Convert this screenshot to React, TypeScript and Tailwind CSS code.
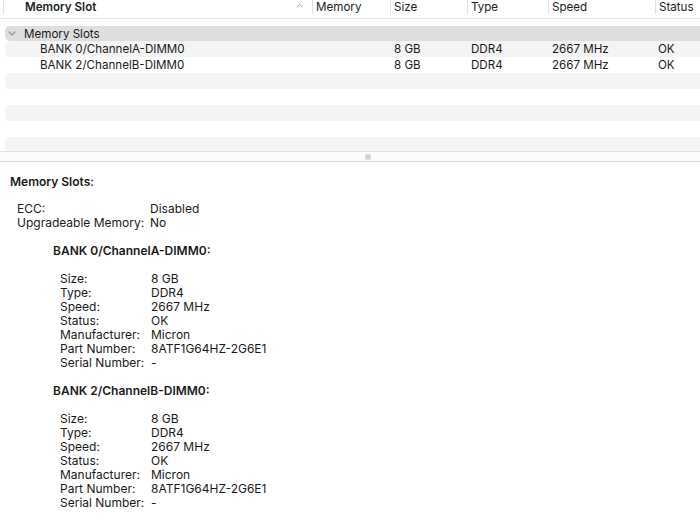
const cols = "grid grid-cols-[307px_78px_77px_81px_107px_1fr]";

type Slot = { name: string; size: string; type: string; speed: string; status: string };

const slots: Slot[] = [
  { name: "BANK 0/ChannelA-DIMM0", size: "8 GB", type: "DDR4", speed: "2667 MHz", status: "OK" },
  { name: "BANK 2/ChannelB-DIMM0", size: "8 GB", type: "DDR4", speed: "2667 MHz", status: "OK" },
];

function HeaderCell({ label, sorted }: { label: string; sorted?: boolean }) {
  return (
    <div
      className={`h-[14px] border-l border-[#e2e2e2] flex items-center text-[#222] ${
        sorted ? "pl-[21px] font-semibold" : "pl-[3px]"
      }`}
    >
      {label}
    </div>
  );
}

function Header() {
  return (
    <div className="h-[19px] border-b border-[#e4e4e4] flex items-start">
      <div className="w-[309px] ml-[3px] relative">
        <HeaderCell label="Memory Slot" sorted />
        <svg className="absolute right-[9px] top-[3px]" width="7" height="5" viewBox="0 0 7 5">
          <path d="M0.6 4.3 L3.5 1.2 L6.4 4.3" fill="none" stroke="#9a9a9a" strokeWidth="1" />
        </svg>
      </div>
      <div className="w-[78px]"><HeaderCell label="Memory" /></div>
      <div className="w-[77px]"><HeaderCell label="Size" /></div>
      <div className="w-[81px]"><HeaderCell label="Type" /></div>
      <div className="w-[107px]"><HeaderCell label="Speed" /></div>
      <div className="flex-1"><HeaderCell label="Status" /></div>
    </div>
  );
}

function SlotTable() {
  const blanks = [0, 1, 2, 3, 4];
  return (
    <div className="h-[151px] overflow-hidden text-[11.6px]">
      <Header />
      <div className="pt-[7px]">
        <div className={`${cols} ml-[5px] h-[15px] items-center rounded-l-[5px] bg-[#dedede]`}>
          <div className="flex items-center">
            <svg className="ml-[3px] mr-[8px]" width="8" height="5" viewBox="0 0 8 5">
              <path d="M0.7 0.7 L4 4 L7.3 0.7" fill="none" stroke="#8a8a8a" strokeWidth="1.1" />
            </svg>
            <span>Memory Slots</span>
          </div>
        </div>
        {slots.map((s, i) => (
          <div
            key={s.name}
            className={`${cols} ml-[5px] h-[16px] items-center rounded-l-[5px] ${i % 2 === 0 ? "bg-[#f4f4f4]" : ""}`}
          >
            <div className="pl-[35px]">{s.name}</div>
            <div />
            <div className="pl-[4px]">{s.size}</div>
            <div className="pl-[4px]">{s.type}</div>
            <div className="pl-[4px]">{s.speed}</div>
            <div className="pl-[3px]">{s.status}</div>
          </div>
        ))}
        {blanks.map((b) => (
          <div key={b} className={`ml-[5px] h-[16px] rounded-l-[5px] ${b % 2 === 0 ? "bg-[#f4f4f4]" : ""}`} />
        ))}
      </div>
    </div>
  );
}

function Splitter() {
  return (
    <div className="h-[11px] border-t border-b border-[#e0e0e0] bg-[#fbfbfb] flex items-center justify-center">
      <div className="w-[6px] h-[6px] rounded-full bg-[#d4d4d4] ml-[36px]" />
    </div>
  );
}

function Rows({ rows, keyWidth }: { rows: [string, string][]; keyWidth: string }) {
  return (
    <div>
      {rows.map(([k, v]) => (
        <div key={k} className="flex">
          <div className={keyWidth}>{k}</div>
          <div>{v}</div>
        </div>
      ))}
    </div>
  );
}

function BankDetails({ name, part }: { name: string; part: string }) {
  return (
    <div className="pl-[43px]">
      <div className="font-semibold">{name}:</div>
      <div className="h-[14px]" />
      <div className="pl-[7px]">
        <Rows
          keyWidth="w-[91px]"
          rows={[
            ["Size:", "8 GB"],
            ["Type:", "DDR4"],
            ["Speed:", "2667 MHz"],
            ["Status:", "OK"],
            ["Manufacturer:", "Micron"],
            ["Part Number:", part],
            ["Serial Number:", "-"],
          ]}
        />
      </div>
    </div>
  );
}

export default function App() {
  return (
    <div
      className="w-[700px] h-[525px] overflow-hidden bg-white leading-[14px] text-[#1a1a1a]"
      style={{ fontFamily: "Inter, 'Noto Sans', sans-serif" }}
    >
      <SlotTable />
      <Splitter />
      <div className="pt-[13px] pl-[10px] text-[12px]">
        <div className="font-semibold">Memory Slots:</div>
        <div className="h-[13px]" />
        <div className="pl-[7px]">
          <Rows
            keyWidth="w-[133px]"
            rows={[
              ["ECC:", "Disabled"],
              ["Upgradeable Memory:", "No"],
            ]}
          />
        </div>
        <div className="h-[14px]" />
        <BankDetails name="BANK 0/ChannelA-DIMM0" part="8ATF1G64HZ-2G6E1" />
        <div className="h-[14px]" />
        <BankDetails name="BANK 2/ChannelB-DIMM0" part="8ATF1G64HZ-2G6E1" />
      </div>
    </div>
  );
}
